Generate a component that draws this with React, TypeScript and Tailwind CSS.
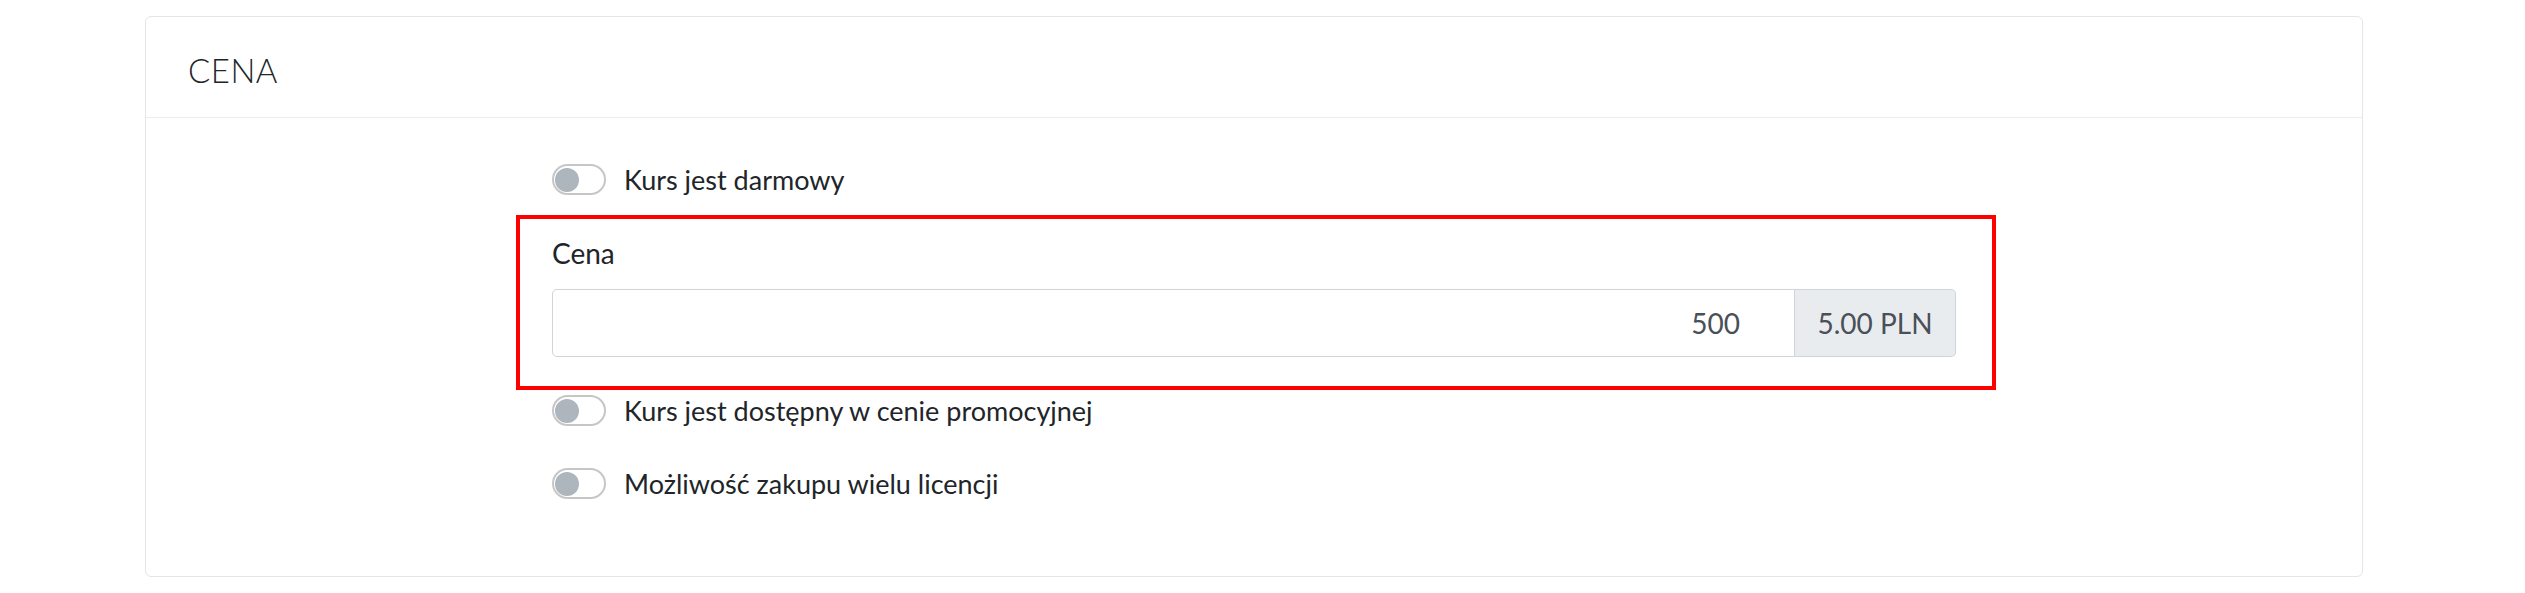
const Toggle = () => {
  return (
    <span className="flex h-[31px] w-[54px] shrink-0 items-center rounded-full border-2 border-[#c6c6c6] bg-white pl-[1px]">
      <span className="h-[24px] w-[24px] rounded-full bg-[#adb5bd]" />
    </span>
  );
};

const SwitchRow = ({ label, className }: { label: string; className?: string }) => {
  return (
    <label className={"flex h-[31px] items-center " + (className ?? "")}>
      <Toggle />
      <span className="ml-[18px] text-[27px] leading-none text-[#212529]">{label}</span>
    </label>
  );
};

const App = () => {
  return (
    <div className="min-h-[593px] bg-white pt-[16px] font-['Lato','Noto_Sans',sans-serif]">
      {/* card */}
      <div className="ml-[145px] w-[2218px] rounded-[6px] border border-[#e5e5e5] bg-white">
        {/* header */}
        <div className="flex h-[101px] items-center border-b border-[#ececec] pl-[42px] pt-[6px]">
          <h2 className="text-[33px] font-light leading-none tracking-[0.5px] text-[#212529]">CENA</h2>
        </div>
        {/* body */}
        <div className="mx-auto w-[1404px] pt-[46px] pb-[77px]">
          <SwitchRow label="Kurs jest darmowy" />
          {/* price form group */}
          <div className="relative mt-[37px]">
            <div className="text-[28px] leading-[42px] text-[#212529]">Cena</div>
            <div className="mt-[15px] flex h-[68px]">
              <div className="flex flex-1 items-center justify-end rounded-l-[5px] border border-[#ced4da] bg-white pr-[54px] text-[28px] text-[#495057]">
                500
              </div>
              <div className="flex w-[161px] items-center justify-center rounded-r-[5px] border border-l-0 border-[#ced4da] bg-[#e9ecef] text-[28px] text-[#495057]">
                5.00 PLN
              </div>
            </div>
            {/* highlight */}
            <div className="pointer-events-none absolute -top-[17px] -right-[40px] -bottom-[33px] -left-[36px] border-4 border-[#ff0000]" />
          </div>
          <SwitchRow label="Kurs jest dostępny w cenie promocyjnej" className="mt-[38px]" />
          <SwitchRow label="Możliwość zakupu wielu licencji" className="mt-[42px]" />
        </div>
      </div>
    </div>
  );
};

export default App;
